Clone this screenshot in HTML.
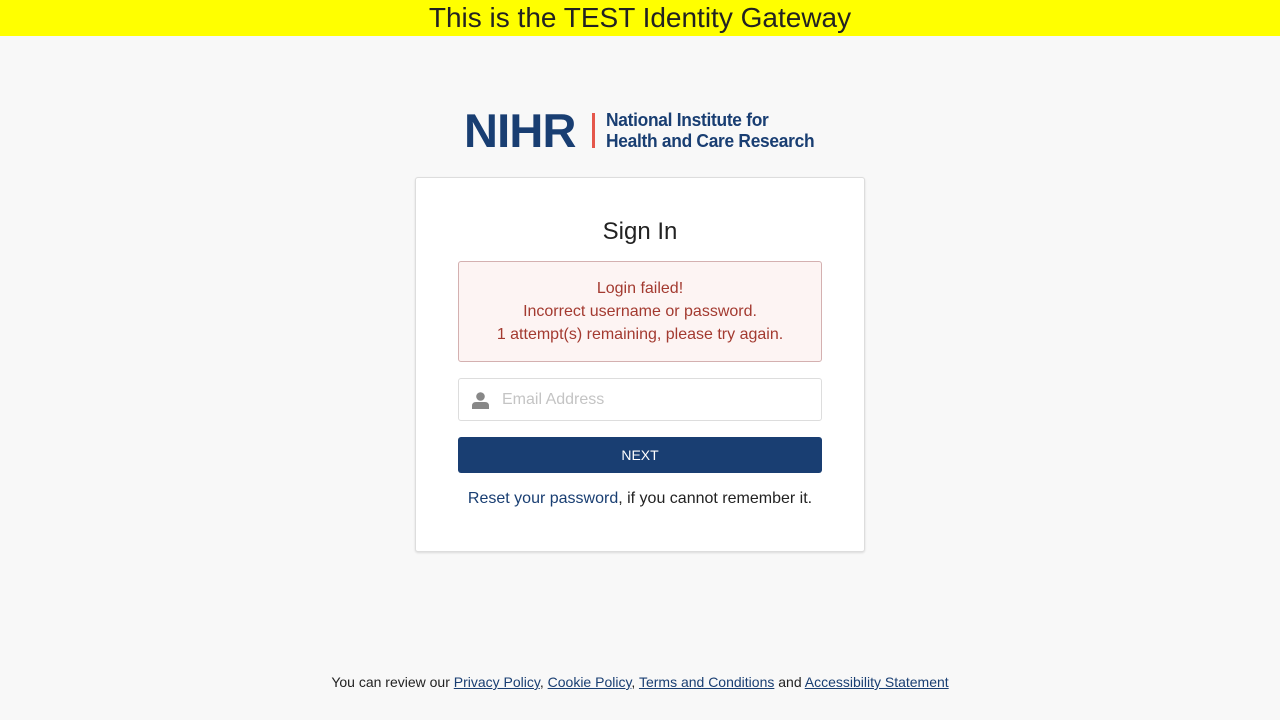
<!DOCTYPE html>
<html><head><meta charset="utf-8"><style>
*{box-sizing:border-box}
body{margin:0;background:#f8f8f8;font-family:"Liberation Sans",sans-serif;color:#222;width:1280px;height:720px;position:relative;overflow:hidden}
.banner{position:absolute;top:0;left:0;width:1280px;height:36px;background:#ffff00;text-align:center;font-size:28px;line-height:36px;color:#222}
.logo{position:absolute;left:464px;top:110px;width:352px;height:42px;white-space:nowrap}
.nihr{position:absolute;left:0;top:-5px;font-size:47px;font-weight:bold;color:#193e72;letter-spacing:-0.8px;line-height:52px}
.bar{position:absolute;left:128px;top:3px;width:3px;height:35px;background:#e5574b}
.sub{position:absolute;left:142px;top:0;font-size:18px;line-height:21px;color:#193e72;font-weight:bold;letter-spacing:-0.3px;transform:scaleX(0.965);transform-origin:left top}
.card{position:absolute;left:415px;top:177px;width:450px;height:375px;background:#fff;border:1px solid #ddd;border-radius:3px;box-shadow:0 1px 2px rgba(0,0,0,.12)}
h1{position:absolute;top:218px;left:0;width:1280px;text-align:center;font-size:24px;font-weight:normal;margin:0;line-height:28px}
.alert{position:absolute;left:458px;top:261px;width:364px;height:101px;background:#fdf4f3;border:1px solid #d4b0b0;border-radius:3px;color:#a33a30;text-align:center;font-size:16px;line-height:23px;padding-top:15px}
.input{position:absolute;left:458px;top:378px;width:364px;height:43px;border:1px solid #ddd;border-radius:3px;background:#fff}
.input span{position:absolute;left:43px;top:12px;font-size:16px;color:#c4c4c4}
.btn{position:absolute;left:458px;top:437px;width:364px;height:36px;background:#193e72;border-radius:3px;color:#fff;text-align:center;line-height:36px;font-size:14px}
.reset{position:absolute;top:490px;left:0;width:1280px;text-align:center;font-size:16px}
.reset a{color:#193e72;text-decoration:none}
.foot{position:absolute;top:674px;left:0;width:1280px;text-align:center;font-size:14px}
.foot a{color:#193e72;text-decoration:underline}
</style></head><body>
<div class="banner">This is the TEST Identity Gateway</div>
<div class="logo"><div class="nihr">NIHR</div><div class="bar"></div><div class="sub">National Institute for<br>Health and Care Research</div></div>
<div class="card"></div>
<h1>Sign In</h1>
<div class="alert">Login failed!<br>Incorrect username or password.<br>1 attempt(s) remaining, please try again.</div>
<div class="input"><svg style="position:absolute;left:13px;top:13px" width="17" height="17" viewBox="0 0 17 17"><circle cx="8.5" cy="4.5" r="4.3" fill="#888"/><path d="M0 17 V14 Q0 10 4 10 H13 Q17 10 17 14 V17Z" fill="#888"/></svg><span>Email Address</span></div>
<div class="btn">NEXT</div>
<div class="reset"><a>Reset your password</a>, if you cannot remember it.</div>
<div class="foot">You can review our <a>Privacy Policy</a>, <a>Cookie Policy</a>, <a>Terms and Conditions</a> and <a>Accessibility Statement</a></div>
</body></html>
